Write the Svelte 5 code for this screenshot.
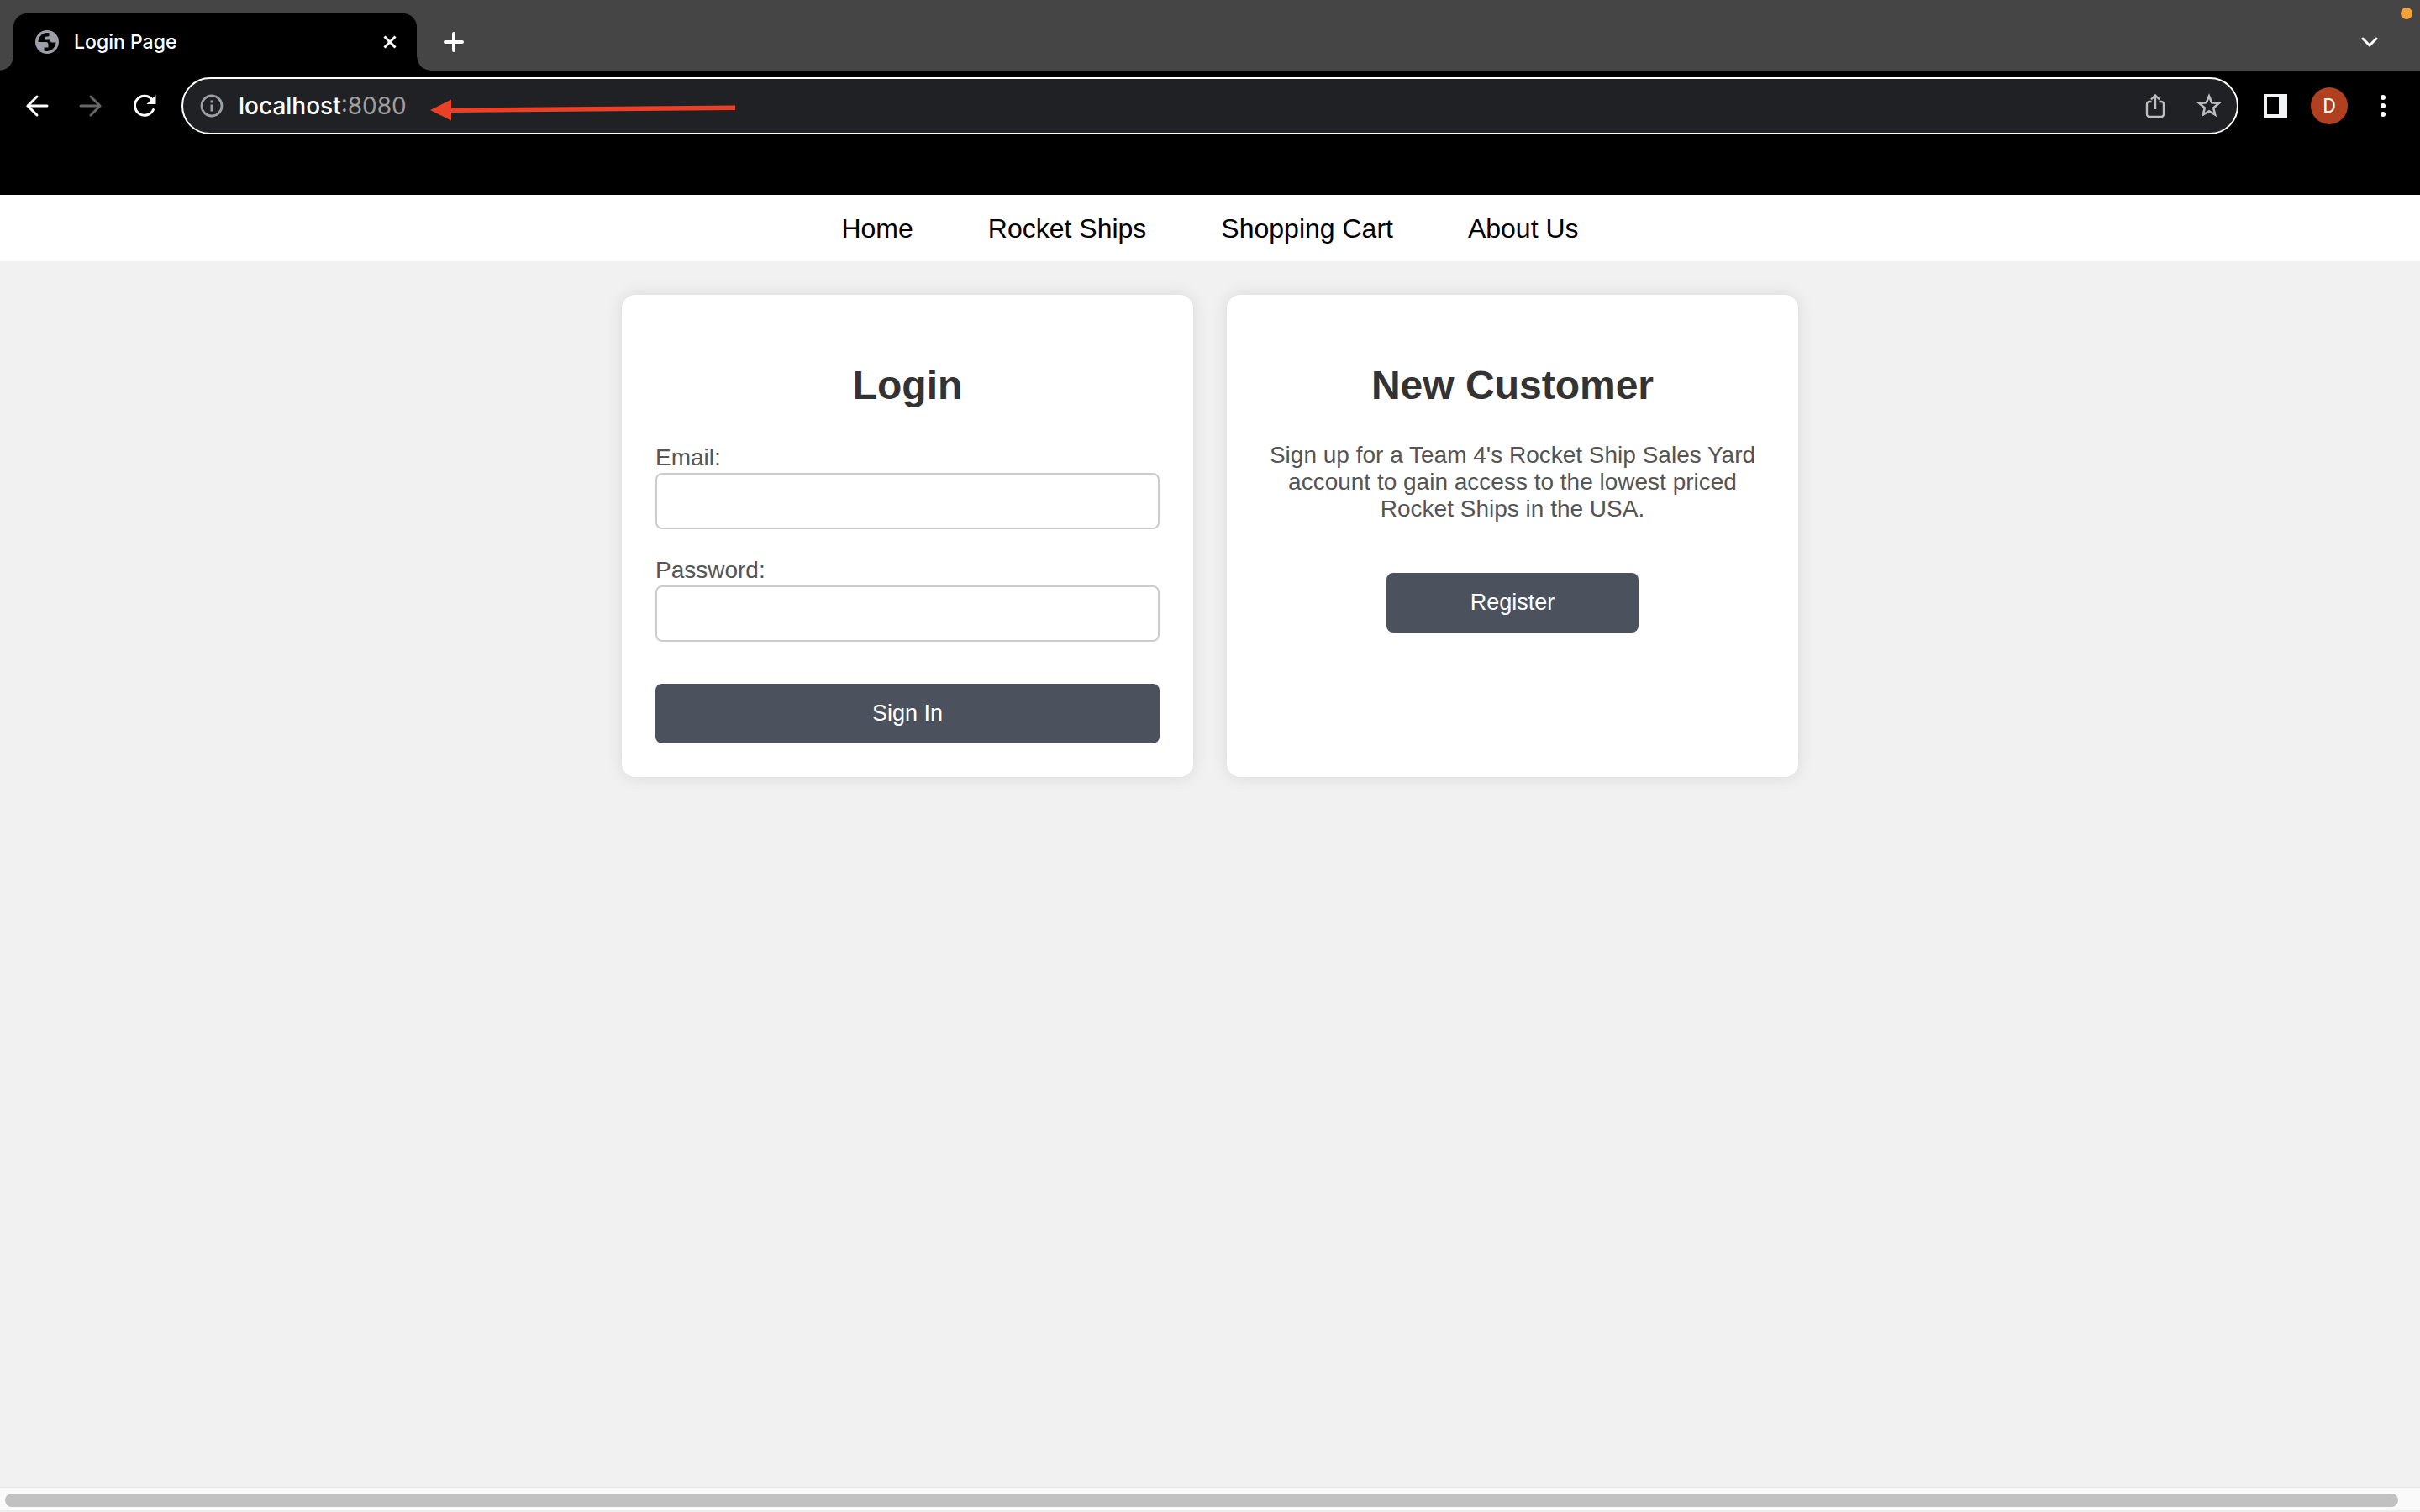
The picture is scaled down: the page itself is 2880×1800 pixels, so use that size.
<script>
  const links = ['Home', 'Rocket Ships', 'Shopping Cart', 'About Us'];
  let email = $state('');
  let password = $state('');
</script>

<svelte:head><title>Login Page</title></svelte:head>

<div class="window">
  <header class="browser">
    <div class="tabstrip">
      <div class="tab">
        <svg class="i28" viewBox="0 0 28 28" aria-hidden="true">
          <circle cx="14" cy="14" r="14" fill="#9aa0a6" />
          <path
            d="M16.500 3.200A11 11 0 0 0 3.500 14H12.500q3 0 3 3v3.500H10.500V24.600A11 11 0 0 0 24.500 14.500H19.500q-1.500 0-1.500-2 0-1-1-1h-5V8.500q0-1 1-1h2q1.500 0 1.500-1.500z"
            fill="#000"
          />
        </svg>
        <span class="tab-title">Login Page</span>
        <button class="plain" aria-label="Close tab">
          <svg class="i16" viewBox="0 0 16 16"><path d="M1.500 1.500l13 13M14.500 1.500l-13 13" stroke="#fff" stroke-width="3" /></svg>
        </button>
      </div>
      <button class="plain" aria-label="New tab">
        <svg class="i24" viewBox="0 0 24 24"><path d="M12 2v20M2 12h20" stroke="#fff" stroke-width="4" stroke-linecap="round" /></svg>
      </button>
      <button class="plain tab-search" aria-label="Search tabs">
        <svg class="i20" viewBox="0 0 20 20"><path d="M2 6l8 8 8-8" fill="none" stroke="#fff" stroke-width="3" stroke-linecap="round" /></svg>
      </button>
      <span class="recording"></span>
    </div>

    <div class="toolbar">
      <div class="nav-buttons">
        <button class="plain" aria-label="Back">
          <svg class="i28" viewBox="0 0 28 28"><path d="M26 14H3M14 3L3 14l11 11" fill="none" stroke="#fff" stroke-width="3" stroke-linecap="round" /></svg>
        </button>
        <button class="plain" aria-label="Forward" disabled>
          <svg class="i28" viewBox="0 0 28 28"><path d="M2 14h23M14 3l11 11-11 11" fill="none" stroke="#666" stroke-width="3" stroke-linecap="round" /></svg>
        </button>
        <button class="plain" aria-label="Reload">
          <svg class="i28" viewBox="0 0 28 28">
            <path d="M24.500 18.500A11.500 11.500 0 1 1 22.500 6" fill="none" stroke="#fff" stroke-width="3" stroke-linecap="round" />
            <path d="M27.500 1v11h-11z" fill="#fff" />
          </svg>
        </button>
      </div>

      <div class="omnibox">
        <svg class="i28" viewBox="0 0 28 28" aria-hidden="true">
          <circle cx="14" cy="14" r="12" fill="none" stroke="#9aa0a6" stroke-width="2.800" />
          <path d="M14 12.500v8M14 7.500v3" stroke="#9aa0a6" stroke-width="3" />
        </svg>
        <span class="address"><span class="host">localhost</span><span class="port">:8080</span></span>
        <svg class="pointer" viewBox="0 0 364 36" aria-hidden="true">
          <path d="M0 23L25 10.500V20.500L363 17.500v5.500L25 26v9.500z" fill="#eb4026" />
        </svg>
        <div class="actions">
          <button class="plain" aria-label="Share">
            <svg class="i30" viewBox="0 0 30 30">
              <path
                d="M10.500 10H8a3 3 0 0 0-3 3v12a3 3 0 0 0 3 3h14a3 3 0 0 0 3-3V13a3 3 0 0 0-3-3h-2.500M15 19V3M10 7.500l5-5 5 5"
                fill="none"
                stroke="#bdbdbd"
                stroke-width="2.400"
              />
            </svg>
          </button>
          <button class="plain" aria-label="Bookmark">
            <svg class="i30" viewBox="0 0 30 30">
              <path
                d="M15 3.500l3.200 7.800 8.300.7-6.300 5.400 1.900 8.100-7.100-4.300-7.100 4.300 1.900-8.100L3.500 12l8.300-.7z"
                fill="none"
                stroke="#bdbdbd"
                stroke-width="2.600"
              />
            </svg>
          </button>
        </div>
      </div>

      <button class="plain" aria-label="Side panel">
        <svg class="i28" viewBox="0 0 28 28"><path d="M0 0h28v28H0zM4 4v20h14V4z" fill="#f1f3f4" fill-rule="evenodd" /></svg>
      </button>
      <button class="avatar" aria-label="Profile">D</button>
      <button class="plain" aria-label="Menu">
        <svg class="i28" viewBox="0 0 28 28" fill="#fff"><circle cx="14" cy="4" r="3" /><circle cx="14" cy="14" r="3" /><circle cx="14" cy="24" r="3" /></svg>
      </button>
    </div>
  </header>

  <nav class="site-nav">
    {#each links as link}
      <a href="#{link}">{link}</a>
    {/each}
  </nav>

  <main>
    <form class="card" onsubmit={(e) => e.preventDefault()}>
      <h2>Login</h2>
      <div class="field">
        <label for="email">Email:</label>
        <input id="email" type="email" bind:value={email} />
      </div>
      <div class="field">
        <label for="password">Password:</label>
        <input id="password" type="password" bind:value={password} />
      </div>
      <button class="primary" type="submit">Sign In</button>
    </form>

    <section class="card customer">
      <h2>New Customer</h2>
      <p>Sign up for a Team 4's Rocket Ship Sales Yard account to gain access to the lowest priced Rocket Ships in the USA.</p>
      <button class="primary register" type="button">Register</button>
    </section>
  </main>

  <div class="scrollbar"><div class="thumb"></div></div>
</div>

<style>
  :global(body) {
    margin: 0;
  }
  .window {
    min-height: 100vh;
    display: flex;
    flex-direction: column;
    background: #f1f1f1;
    font-family: 'Liberation Sans', Arial, sans-serif;
  }
  svg {
    display: block;
    flex: none;
  }
  .i16 { width: 16px; height: 16px; }
  .i20 { width: 20px; height: 20px; }
  .i24 { width: 24px; height: 24px; }
  .i28 { width: 28px; height: 28px; }
  .i30 { width: 30px; height: 30px; }
  .plain {
    padding: 0;
    border: 0;
    background: none;
  }

  .browser {
    background: #000;
    color: #fff;
    font-family: Inter, sans-serif;
  }
  .tabstrip {
    position: relative;
    display: flex;
    align-items: center;
    gap: 32px;
    padding: 16px 50px 0 16px;
    background: #454545;
  }
  .tab {
    position: relative;
    display: flex;
    align-items: center;
    box-sizing: border-box;
    width: 480px;
    height: 68px;
    padding: 0 24px 0 26px;
    border-radius: 16px 16px 0 0;
    background: #000;
  }
  .tab::before,
  .tab::after {
    content: '';
    position: absolute;
    bottom: 0;
    width: 16px;
    height: 16px;
  }
  .tab::before {
    right: 100%;
    background: radial-gradient(circle at 0 0, transparent 15px, #000 16px);
  }
  .tab::after {
    left: 100%;
    background: radial-gradient(circle at 100% 0, transparent 15px, #000 16px);
  }
  .tab-title {
    flex: 1;
    margin-left: 18px;
    font-size: 23px;
    font-weight: 500;
  }
  .tab-search {
    margin-left: auto;
  }
  .recording {
    position: absolute;
    top: 9px;
    right: 9px;
    width: 14px;
    height: 14px;
    border-radius: 50%;
    background: #f4a33b;
  }
  .toolbar {
    display: flex;
    align-items: center;
    gap: 30px;
    padding: 8px 30px 72px;
  }
  .nav-buttons {
    display: flex;
    gap: 36px;
  }
  .omnibox {
    flex: 1;
    display: flex;
    align-items: center;
    box-sizing: border-box;
    height: 68px;
    padding: 0 18px 0 20px;
    border: 2px solid #fff;
    border-radius: 34px;
    background: #202124;
  }
  .address {
    margin-left: 18px;
    font-size: 28px;
  }
  .host {
    font-weight: 500;
  }
  .port {
    color: #9e9e9e;
  }
  .pointer {
    width: 364px;
    height: 36px;
    margin-left: 28px;
  }
  .actions {
    display: flex;
    gap: 34px;
    margin-left: auto;
  }
  .avatar {
    width: 44px;
    height: 44px;
    margin: 0 -2px;
    padding: 0;
    border: 0;
    border-radius: 50%;
    background: #b04020;
    color: #fff;
    font: 24px Roboto, sans-serif;
  }

  .site-nav {
    display: flex;
    justify-content: center;
    gap: 89px;
    padding: 22px 0 20px;
    background: #fff;
    font-size: 32px;
    line-height: 37px;
  }
  .site-nav a {
    color: #000;
    text-decoration: none;
  }
  main {
    flex: 1;
    display: flex;
    justify-content: center;
    align-items: flex-start;
    padding: 40px;
    gap: 40px;
  }
  .card {
    box-sizing: border-box;
    width: 680px;
    padding: 40px;
    border-radius: 16px;
    background: #fff;
    box-shadow: 0 0 20px rgba(0, 0, 0, 0.1);
    color: #555;
    font-size: 28px;
  }
  .customer {
    align-self: stretch;
    height: 574px;
    text-align: center;
  }
  h2 {
    margin: 40px 0;
    color: #333;
    font-size: 48px;
    line-height: 55px;
    text-align: center;
  }
  .field {
    padding-top: 2px;
    margin-bottom: 30px;
  }
  label {
    display: block;
    padding-bottom: 2px;
    line-height: 33px;
  }
  input {
    display: block;
    box-sizing: border-box;
    width: 100%;
    height: 67px;
    padding: 0 16px;
    border: 2px solid #ccc;
    border-radius: 8px;
    background: #fff;
    font: inherit;
  }
  .primary {
    display: block;
    width: 100%;
    height: 71px;
    margin-top: 50px;
    padding: 0;
    border: 0;
    border-radius: 8px;
    background: #4b525d;
    color: #fff;
    font-family: inherit;
    font-size: 27px;
  }
  p {
    margin: 0 0 60px;
    line-height: 32px;
  }
  .register {
    width: 50%;
    margin: 0 auto;
  }

  .scrollbar {
    box-sizing: border-box;
    height: 30px;
    padding: 6px 26px 4px 6px;
    border-top: 2px solid #e8e8e8;
    border-bottom: 2px solid #ededed;
    background: #fafafa;
  }
  .thumb {
    height: 16px;
    border-radius: 8px;
    background: #c1c1c1;
  }
</style>
